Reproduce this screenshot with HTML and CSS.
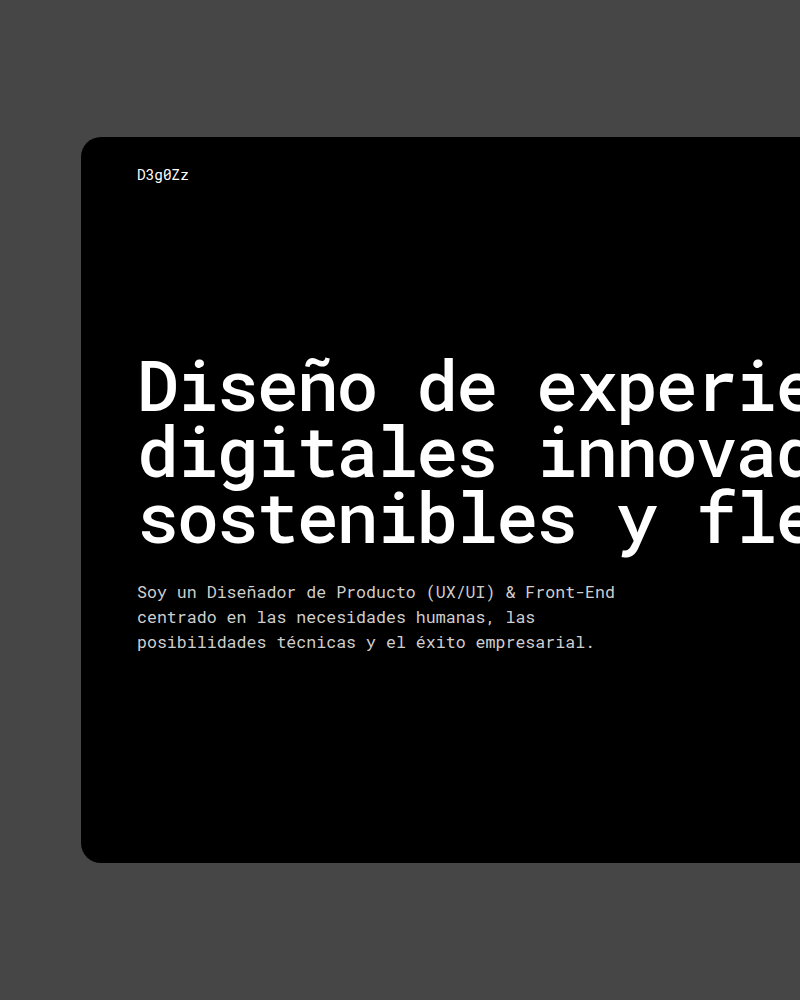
FILE: index.html
```html
<!DOCTYPE html>
<html lang="es">
<head>
<meta charset="utf-8">
<title>D3g0Zz</title>
<link rel="stylesheet" href="styles.css">
</head>
<body>
<main class="stage">
  <section class="card">
    <header class="logo">D3g0Zz</header>
    <div class="hero">
      <h1 class="title">Diseño de experiencias<br>digitales innovadoras,<br>sostenibles y flexibles.</h1>
      <p class="lead">Soy un Diseñador de Producto (UX/UI) &amp; Front-End<br>centrado en las necesidades humanas, las<br>posibilidades técnicas y el éxito empresarial.</p>
    </div>
  </section>
</main>
</body>
</html>
```
FILE: styles.css
```css
html, body {
  margin: 0;
  padding: 0;
  height: 100%;
}
body {
  background: #464646;
  overflow: hidden;
  font-family: "Roboto Mono", "DejaVu Sans Mono", "Liberation Mono", monospace;
}
.stage {
  padding: 137px 0 0 81px;
}
.card {
  background: #000;
  width: 900px;
  height: 726px;
  border-radius: 20px 0 0 20px;
  box-sizing: border-box;
  padding: 28px 0 0 56px;
  display: flex;
  flex-direction: column;
}
.logo {
  color: #fff;
  font-size: 14.4px;
  line-height: 20px;
  font-weight: 400;
}
.hero {
  margin-top: 166px;
}
.title {
  margin: 0;
  color: #fff;
  font-size: 70px;
  line-height: 66px;
  letter-spacing: -2.1px;
  font-weight: 500;
  white-space: nowrap;
}
.lead {
  margin: 30px 0 0;
  color: #cfcfcf;
  font-size: 16.6px;
  line-height: 25px;
  white-space: nowrap;
}
```
